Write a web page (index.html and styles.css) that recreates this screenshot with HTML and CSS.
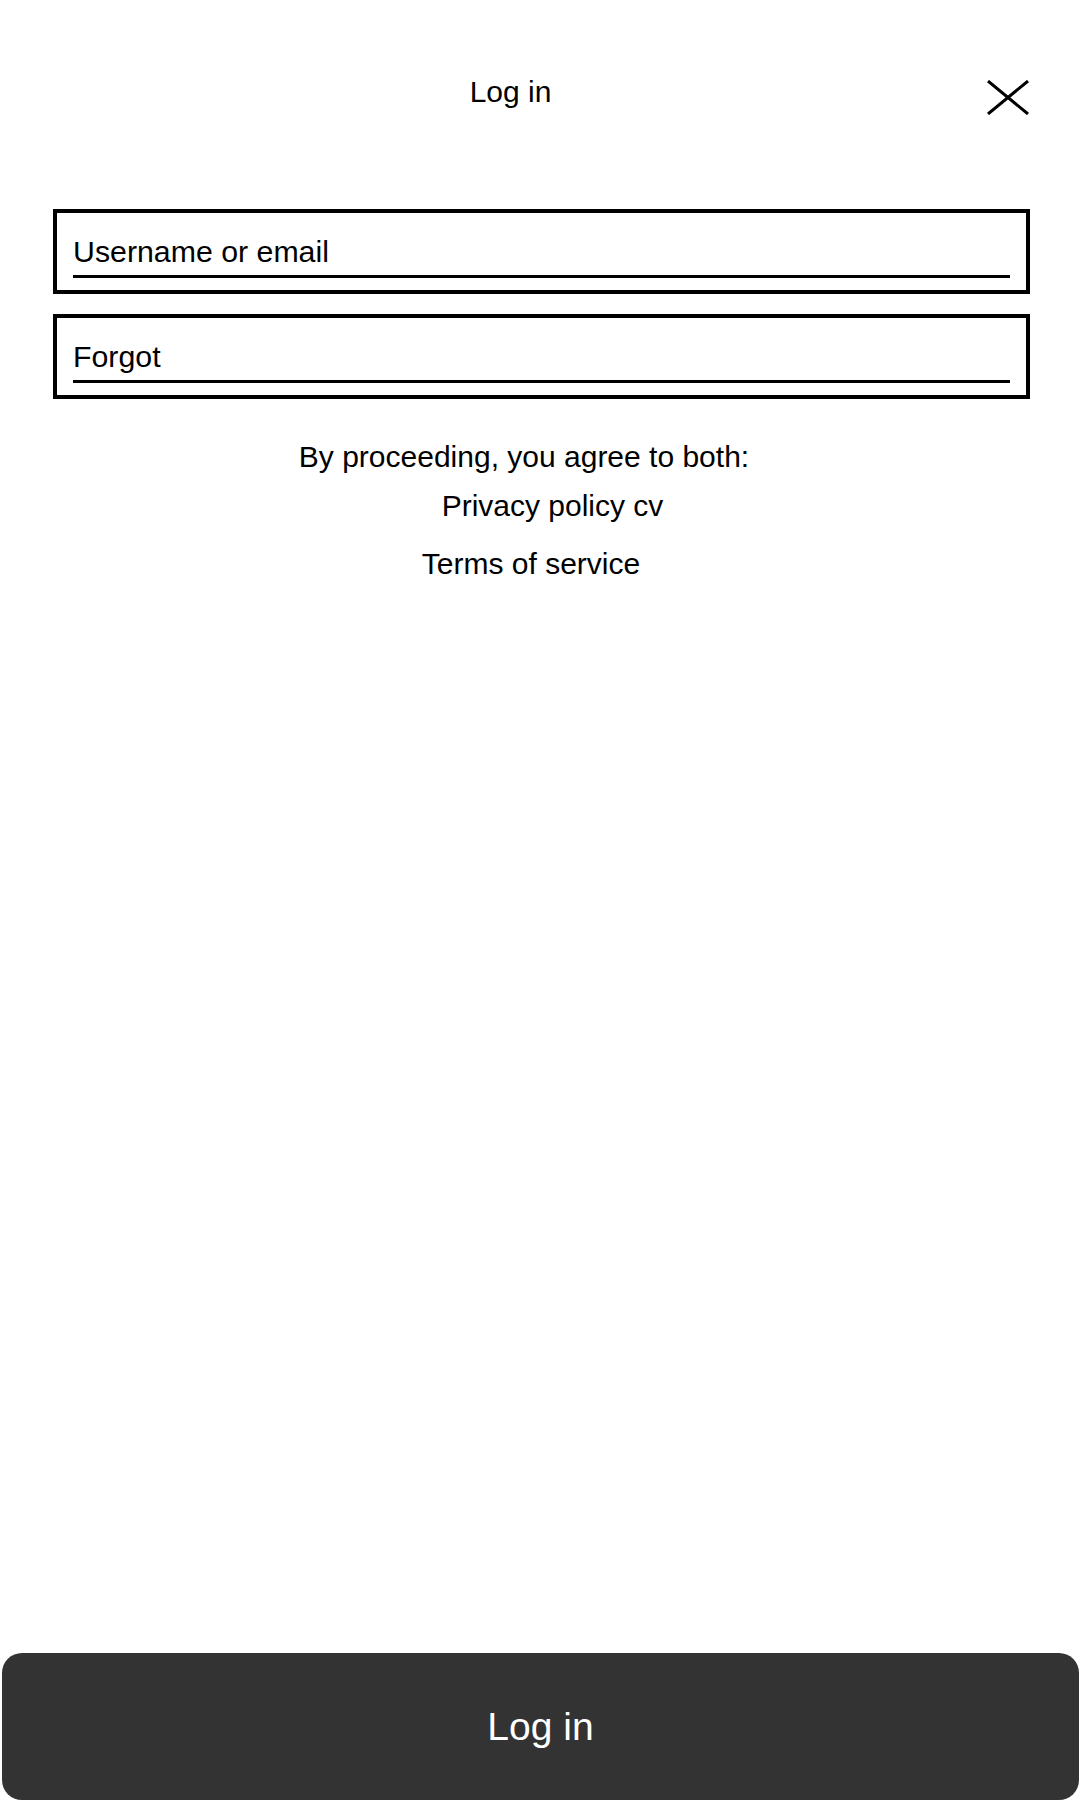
FILE: index.html
```html
<!DOCTYPE html>
<html lang="en">
<head>
<meta charset="utf-8">
<title>Log in</title>
<link rel="stylesheet" href="styles.css">
</head>
<body>
<div class="page">
  <header class="header">
    <div class="title">Log in</div>
    <button class="close" aria-label="Close">
      <svg width="42" height="35" viewBox="0 0 42 35"><path d="M1 1 L41 34 M41 1 L1 34" stroke="#000" stroke-width="3" fill="none"/></svg>
    </button>
  </header>
  <form class="form">
    <div class="box"><div class="field">Username or email</div></div>
    <div class="box"><div class="field">Forgot</div></div>
  </form>
  <div class="legal">
    <p class="agree">By proceeding, you agree to both:</p>
    <p class="privacy">Privacy policy cv</p>
    <p class="terms">Terms of service</p>
  </div>
  <button class="login">Log in</button>
</div>
</body>
</html>
```
FILE: styles.css
```css
html, body {
  margin: 0;
  padding: 0;
  background: #fff;
}
body {
  font-family: "Liberation Sans", Arial, sans-serif;
  color: #000;
}
.page {
  display: flex;
  flex-direction: column;
  height: 1800px;
}
.header {
  display: flex;
  align-items: flex-start;
  padding-top: 75px;
}
.title {
  flex: 1;
  text-align: center;
  font-size: 30px;
  line-height: 34px;
  padding-left: 34px;
}
.close {
  margin: 5px 51px 0 0;
  padding: 0;
  border: 0;
  background: none;
  width: 42px;
  height: 35px;
  display: block;
}
.close svg { display: block; }
.form {
  margin: 94px 50px 0 53px;
  display: flex;
  flex-direction: column;
  gap: 20px;
}
.box {
  border: 4px solid #000;
  padding: 22px 16px 12px;
}
.field {
  font-size: 30.3px;
  line-height: 34px;
  padding-bottom: 6px;
  border-bottom: 3px solid #000;
}
.legal {
  margin-top: 41px;
  font-size: 30px;
  line-height: 34px;
}
.legal p {
  margin: 0;
  text-align: center;
}
.agree { padding-right: 32px; }
.privacy { padding-left: 25px; margin-top: 15px !important; }
.terms { padding-right: 18px; margin-top: 24px !important; }
.login {
  margin: auto 1px 0 2px;
  height: 147px;
  border: 0;
  border-radius: 20px;
  background: #333;
  color: #fff;
  font-family: "Liberation Sans", Arial, sans-serif;
  font-size: 39px;
  line-height: 44px;
  padding: 0;
}
```
